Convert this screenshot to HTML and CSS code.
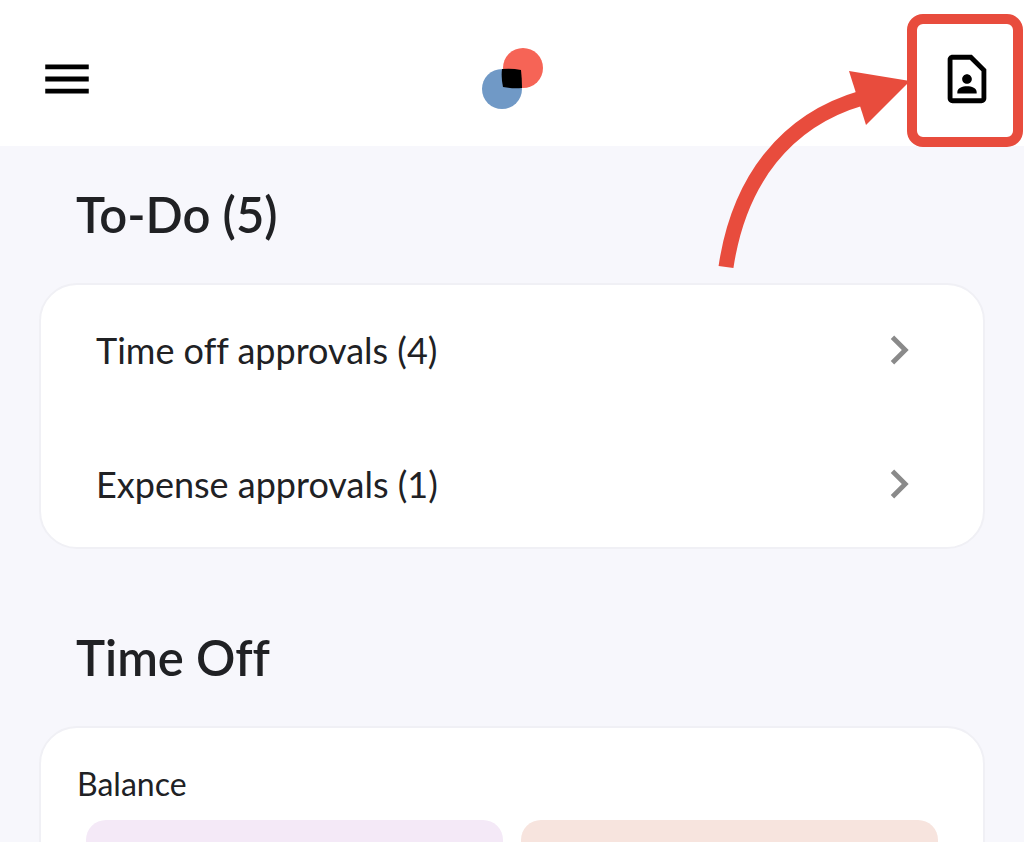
FILE: index.html
```html
<!DOCTYPE html>
<html lang="en">
<head>
    <meta charset="UTF-8">
    <meta name="viewport" content="width=device-width, initial-scale=1.0">
    <title>Home</title>
    <link rel="stylesheet" href="styles.css">
</head>
<body>
    <header class="topbar">
        <button class="icon-btn" type="button" aria-label="Menu">
            <svg class="icon" viewBox="0 0 24 24"><path d="M3 18h18v-2H3v2zm0-5h18v-2H3v2zm0-7v2h18V6H3z"/></svg>
        </button>
        <svg class="logo" viewBox="0 0 62 62" aria-hidden="true">
            <circle cx="41" cy="20" r="20" fill="#f66456"/>
            <circle cx="20" cy="41" r="20" fill="#7099c6"/>
            <path d="M20 21Q30 20 39 22Q40 31 40 40Q31 41 21 39Q19 30 20 21z" fill="#000"/>
        </svg>
        <div class="profile">
            <button class="icon-btn" type="button" aria-label="Profile">
                <svg class="icon" viewBox="0 0 24 24"><path d="M13.17 4 18 8.83V20H6V4h7.17M14 2H6c-1.1 0-2 .9-2 2v16c0 1.1.9 2 2 2h12c1.1 0 2-.9 2-2V8l-6-6zm-2 12c1.1 0 2-.9 2-2s-.9-2-2-2-2 .9-2 2 .9 2 2 2zm4 3.43c0-.81-.48-1.53-1.22-1.85-.85-.37-1.79-.58-2.78-.58s-1.93.21-2.78.58C8.48 15.9 8 16.62 8 17.43V18h8v-.57z"/></svg>
            </button>
        </div>
        <!-- callout pointing at the profile button -->
        <svg class="callout" viewBox="0 0 324 280" aria-hidden="true">
            <path d="M26 267C39 180 86 120 162 98" fill="none" stroke="#e84c3d" stroke-width="15"/>
            <path d="M149 71L210 81L166 125z" fill="#e84c3d"/>
            <rect x="212" y="19" width="106" height="123" rx="11" fill="none" stroke="#e84c3d" stroke-width="10"/>
        </svg>
    </header>
    <main>
        <h2>To-Do (5)</h2>
        <div class="card todo">
            <a class="row" href="#">
                <span>Time off approvals (4)</span>
                <svg class="icon chevron" viewBox="0 0 24 24"><path d="M10 6 8.59 7.41 13.17 12l-4.58 4.59L10 18l6-6z"/></svg>
            </a>
            <a class="row" href="#">
                <span>Expense approvals (1)</span>
                <svg class="icon chevron" viewBox="0 0 24 24"><path d="M10 6 8.59 7.41 13.17 12l-4.58 4.59L10 18l6-6z"/></svg>
            </a>
        </div>
        <h2>Time Off</h2>
        <div class="card balance">
            <h3>Balance</h3>
            <div class="tiles">
                <div class="tile purple"></div>
                <div class="tile peach"></div>
            </div>
        </div>
    </main>
</body>
</html>
```
FILE: styles.css
```css
* {
    box-sizing: border-box;
}
body {
    margin: 0;
    height: 100vh;
    overflow: hidden;
    background: #f7f7fc;
    color: #202124;
    font-family: Lato, sans-serif;
    font-variant-ligatures: none;
}
.topbar {
    position: relative;
    display: grid;
    grid-template-columns: 1fr auto 1fr;
    align-items: center;
    padding: 50px 28px 38px 38px;
    background: #fff;
}
.icon-btn {
    display: block;
    padding: 0;
    border: 0;
    background: none;
    color: #000;
    cursor: pointer;
    justify-self: start;
}
.icon {
    display: block;
    width: 58px;
    height: 58px;
    fill: currentColor;
}
.logo {
    width: 62px;
    height: 62px;
    margin: -2px 8px -2px 0;
}
.profile {
    justify-self: end;
}
.callout {
    position: absolute;
    top: 0;
    right: 0;
    width: 324px;
    height: 280px;
    pointer-events: none;
}
main {
    padding: 0 39px;
}
h2 {
    margin: 0;
    padding: 36px 37px 37px;
    font-size: 49px;
    line-height: 64px;
    font-weight: 600;
}
.card {
    background: #fff;
    border: 2px solid #f0f0f5;
    border-radius: 38px;
}
.todo {
    display: flex;
    flex-direction: column;
    gap: 34px;
    padding: 15px 55px 13px;
    margin-bottom: 40px;
}
.row {
    display: flex;
    align-items: center;
    justify-content: space-between;
    height: 100px;
    color: inherit;
    font-size: 36px;
    text-decoration: none;
}
.chevron {
    color: #8a8a8a;
}
.balance {
    padding: 36px 45px;
}
h3 {
    margin: 0 -9px;
    font-size: 32px;
    line-height: 40px;
    font-weight: 400;
}
.tiles {
    display: grid;
    grid-template-columns: 1fr 1fr;
    gap: 18px;
    margin-top: 16px;
}
.tile {
    height: 200px;
    border-radius: 20px;
}
.purple {
    background: #f4e9f7;
}
.peach {
    background: #f7e4de;
}
```
